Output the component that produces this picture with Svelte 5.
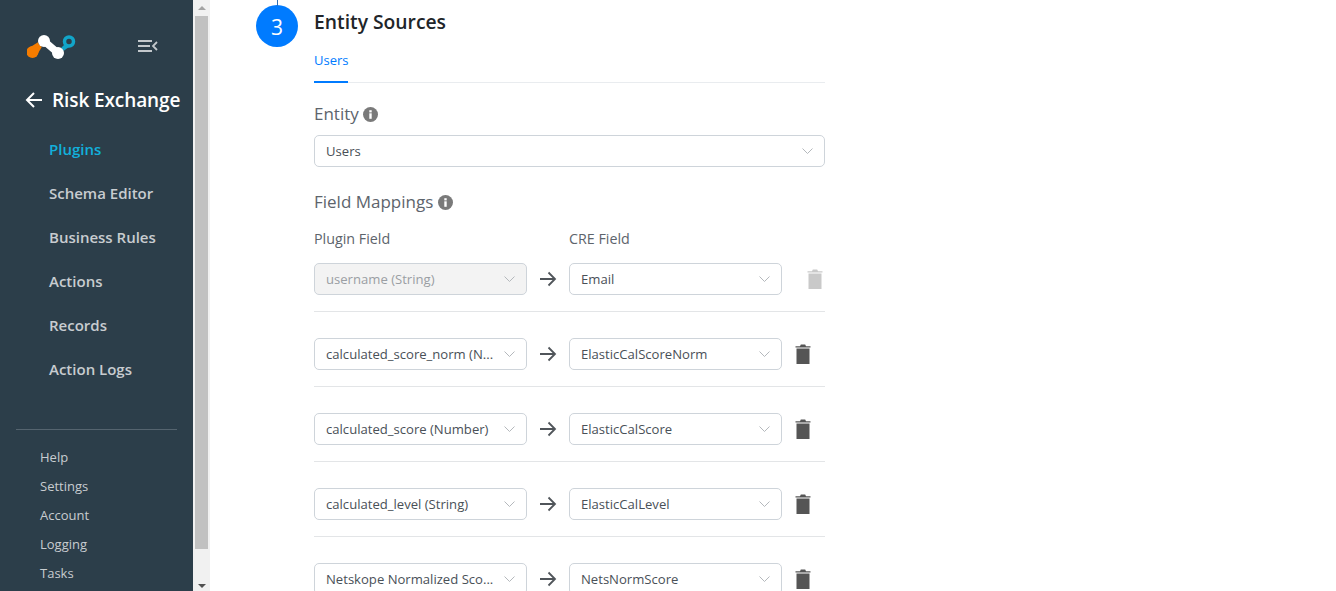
<script>
  const navItems = ["Plugins", "Schema Editor", "Business Rules", "Actions", "Records", "Action Logs"];
  const footerLinks = ["Help", "Settings", "Account", "Logging", "Tasks"];
  const mappings = [
    { plugin: "username (String)", cre: "Email", locked: true },
    { plugin: "calculated_score_norm (N...", cre: "ElasticCalScoreNorm" },
    { plugin: "calculated_score (Number)", cre: "ElasticCalScore" },
    { plugin: "calculated_level (String)", cre: "ElasticCalLevel" },
    { plugin: "Netskope Normalized Sco...", cre: "NetsNormScore" }
  ];
</script>

<style>
  :global(body) {
    margin: 0;
    background: #fff;
    overflow: hidden;
  }

  a {
    text-decoration: none;
  }

  .page {
    display: flex;
    height: 591px;
    overflow: hidden;
    font-family: "Open Sans", "Noto Sans", sans-serif;
    color: #495057;
  }

  .sidebar {
    width: 193px;
    flex: none;
    background: #2c3e4a;
    display: flex;
    flex-direction: column;
  }

  .brand {
    display: flex;
    align-items: center;
    justify-content: space-between;
    height: 30px;
    margin-top: 31px;
    padding: 0 35px 0 27px;
  }

  .back {
    display: flex;
    align-items: center;
    gap: 8px;
    margin: 24px 0 0 25px;
    height: 30px;
    color: #fff;
    font-size: 19px;
    font-weight: 600;
    white-space: nowrap;
    letter-spacing: -0.1px;
  }

  .nav {
    display: flex;
    flex-direction: column;
    margin-top: 12px;
    padding-left: 49px;
  }

  .nav a {
    height: 44px;
    line-height: 44px;
    font-size: 15px;
    font-weight: 600;
    color: #c8ccd0;
  }

  .nav a.active {
    color: #12b0dc;
  }

  .footer {
    margin: 38px 16px 0;
    padding: 13px 0 0 24px;
    border-top: 1px solid #55646f;
  }

  .footer a {
    display: block;
    height: 29px;
    line-height: 29px;
    font-size: 13px;
    color: #c8ccd0;
  }

  .scrollbar {
    width: 17px;
    flex: none;
    background: #f1f1f1;
    display: flex;
    flex-direction: column;
    align-items: center;
  }

  .arrow-up,
  .arrow-down {
    width: 0;
    height: 0;
    border-left: 4px solid transparent;
    border-right: 4px solid transparent;
  }

  .arrow-up {
    margin-top: 6px;
    border-bottom: 4px solid #a3a3a3;
  }

  .arrow-down {
    margin-top: 35px;
    border-top: 4px solid #505050;
  }

  .thumb {
    width: 100%;
    height: 533px;
    margin-top: 6px;
    background: #c1c1c1;
    box-sizing: border-box;
    border: solid #f1f1f1;
    border-width: 0 2px 0 2px;
  }

  .main {
    flex: 1;
    display: flex;
    padding-left: 46px;
    position: relative;
  }

  .tick {
    position: absolute;
    left: 67px;
    top: 0;
    width: 1px;
    height: 6px;
    background: #2f6fb5;
  }

  .step {
    width: 42px;
    height: 42px;
    flex: none;
    margin-top: 5px;
    border-radius: 50%;
    background: #007bff;
    color: #fff;
    font-size: 21px;
    line-height: 44px;
    text-align: center;
  }

  .content {
    width: 511px;
    margin-left: 16px;
  }

  h2 {
    margin: 6px 0 0;
    height: 32px;
    font-size: 19.300px;
    font-weight: 600;
    line-height: 32px;
    color: #212529;
  }

  .tabs {
    margin-top: 10px;
    height: 35px;
    box-sizing: border-box;
    border-bottom: 1px solid #e9ecef;
  }

  .tab {
    display: inline-block;
    height: 35px;
    box-sizing: border-box;
    padding-top: 1px;
    line-height: 23px;
    font-size: 13px;
    color: #007bff;
    border-bottom: 2px solid #007bff;
  }

  .heading {
    display: flex;
    align-items: center;
    gap: 5px;
    font-size: 17px;
    line-height: 24px;
    color: #5d646c;
  }

  .entity {
    margin-top: 19px;
    gap: 4px;
  }

  .field {
    display: flex;
    align-items: center;
    justify-content: space-between;
    box-sizing: border-box;
    height: 32px;
    padding: 0 11px;
    border: 1px solid #ced4da;
    border-radius: 5px;
    background: #fff;
    font-size: 13.100px;
    color: #495057;
    white-space: nowrap;
  }

  .field.disabled {
    background: #f3f3f3;
    color: #9a9ea3;
  }

  .entity-field {
    margin-top: 9px;
  }

  .mappings {
    margin-top: 23px;
  }

  .labels {
    display: grid;
    grid-template-columns: 255px 1fr;
    margin-top: 15px;
    font-size: 14.300px;
    line-height: 20px;
    color: #5d646c;
  }

  .row {
    display: grid;
    grid-template-columns: 213px 42px 213px 1fr;
    align-items: center;
    padding: 26px 0 16px;
    border-bottom: 1px solid #e3e5e7;
  }

  .row:first-child {
    padding-top: 14px;
  }

  .to {
    display: flex;
    justify-content: center;
  }

  .del {
    display: flex;
    justify-content: flex-end;
    padding-right: 14px;
  }

  .row.locked .del {
    padding-right: 2px;
  }
</style>

<div class="page">
  <aside class="sidebar">
    <div class="brand">
      <svg width="50" height="28" viewBox="0 0 50 28" aria-hidden="true">
        <path d="M1 16.500L13 9L16 13L10 23Z" fill="#f57c00" />
        <circle cx="5.500" cy="20" r="6" fill="#f57c00" />
        <path d="M33 17L38 12L42 15L35 20Z" fill="#12a5c9" />
        <circle cx="42" cy="9.500" r="4.500" fill="none" stroke="#12a5c9" stroke-width="3.500" />
        <path d="M17 9L31 21" stroke="#2c3e4a" stroke-width="12" stroke-linecap="round" fill="none" />
        <path d="M17 9L31 21" stroke="#fff" stroke-width="7" stroke-linecap="round" fill="none" />
        <circle cx="17" cy="9" r="6" fill="#fff" />
        <circle cx="31" cy="21" r="6" fill="#fff" />
      </svg>
      <svg width="20" height="14" viewBox="0 0 20 14" aria-hidden="true">
        <path d="M0 2H14M0 7H12M0 12H14" stroke="#c3c8cc" stroke-width="1.800" fill="none" />
        <path d="M19 3L15 7L19 11" stroke="#c3c8cc" stroke-width="1.800" fill="none" />
      </svg>
    </div>
    <div class="back">
      <svg width="19" height="18" viewBox="0 0 19 18" aria-hidden="true">
        <path d="M17 9H2M9 2L2 9L9 16" stroke="#fff" stroke-width="2" fill="none" />
      </svg>
      Risk Exchange
    </div>
    <nav class="nav">
      {#each navItems as item, i}
        <a class:active={i === 0} href="#top">{item}</a>
      {/each}
    </nav>
    <div class="footer">
      {#each footerLinks as link}
        <a href="#top">{link}</a>
      {/each}
    </div>
  </aside>

  <div class="scrollbar">
    <div class="arrow-up"></div>
    <div class="thumb"></div>
    <div class="arrow-down"></div>
  </div>

  <main class="main">
    <div class="tick"></div>
    <div class="step">3</div>
    <div class="content">
      <h2>Entity Sources</h2>
      <div class="tabs"><span class="tab">Users</span></div>

      <div class="heading entity">Entity {@render info()}</div>
      <div class="field entity-field">Users {@render chevron()}</div>

      <div class="heading mappings">Field Mappings {@render info()}</div>
      <div class="labels"><span>Plugin Field</span><span>CRE Field</span></div>

      <div class="rows">
        {#each mappings as m}
          <div class="row" class:locked={m.locked}>
            <div class="field" class:disabled={m.locked}>{m.plugin} {@render chevron()}</div>
            <div class="to">
              <svg width="18" height="16" viewBox="0 0 18 16" aria-hidden="true">
                <path d="M1 8H16M9.500 1.500L16 8L9.500 14.500" stroke="#50555a" stroke-width="1.800" fill="none" />
              </svg>
            </div>
            <div class="field">{m.cre} {@render chevron()}</div>
            <div class="del">
              <svg width="16" height="20" viewBox="0 0 16 20" aria-hidden="true">
                <path d="M0.500 2.200H5L5.800 0.500H10.200L11 2.200H15.500V3.500H0.500ZM1.500 4.500H14.500V20H1.500Z" fill={m.locked ? "#c9c9c9" : "#555555"} />
              </svg>
            </div>
          </div>
        {/each}
      </div>
    </div>
  </main>
</div>

{#snippet chevron()}
  <svg width="11" height="6" viewBox="0 0 11 6" aria-hidden="true">
    <path d="M0.500 0.500L5.500 5.500L10.500 0.500" stroke="#b4b8bc" stroke-width="1" fill="none" />
  </svg>
{/snippet}

{#snippet info()}
  <svg width="15" height="15" viewBox="0 0 15 15" aria-hidden="true">
    <circle cx="7.500" cy="7.500" r="7.500" fill="#7a7a7a" />
    <rect x="6.300" y="6.300" width="2.400" height="5.500" fill="#fff" />
    <rect x="6.300" y="3.200" width="2.400" height="2.200" fill="#fff" />
  </svg>
{/snippet}
